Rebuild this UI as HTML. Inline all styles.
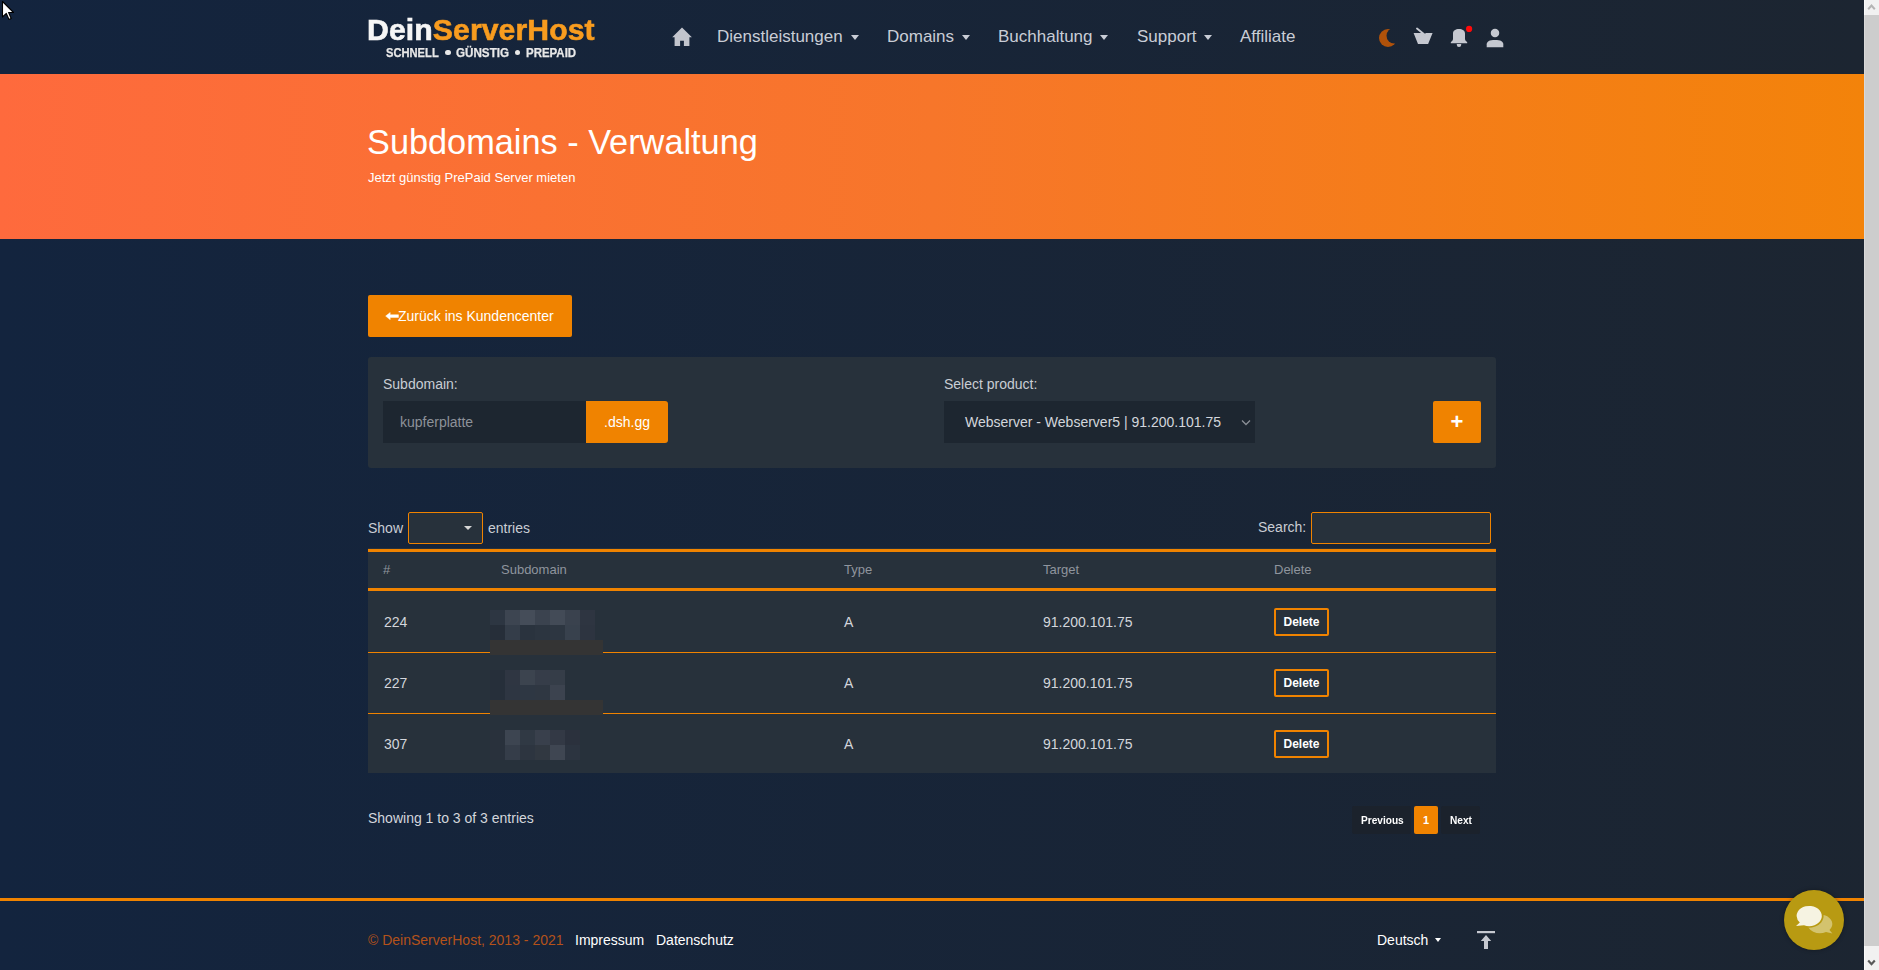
<!DOCTYPE html>
<html><head><meta charset="utf-8">
<style>
*{box-sizing:border-box;margin:0;padding:0}
html,body{width:1879px;height:970px;overflow:hidden}
body{font-family:"Liberation Sans",sans-serif;position:relative;background:linear-gradient(90deg,#13243e 0%,#1c2531 100%);color:#d3d6dc}
.a{position:absolute;white-space:nowrap}
#hdr{position:absolute;left:0;top:0;width:1864px;height:74px;background:linear-gradient(90deg,#13243e 0%,#1c2531 100%)}
#banner{position:absolute;left:0;top:74px;width:1864px;height:165px;background:linear-gradient(90deg,#fe6a3d 0%,#f7762a 50%,#f3830a 100%)}
.nav{font-size:17px;color:#c9cdd6;line-height:20px}
.caret{position:absolute;width:0;height:0;border-left:4px solid transparent;border-right:4px solid transparent;border-top:5px solid #c9cdd6}
.btn{background:#f08300;color:#fff;border-radius:2px}
#panel{position:absolute;left:368px;top:357px;width:1128px;height:111px;background:#27313b;border-radius:3px}
.lbl{font-size:14px;color:#c9cdd4}
#tbl{position:absolute;left:368px;top:548px;width:1128px;height:225px;background:#27313b}
.ol{position:absolute;left:0;width:1128px;background:#f08300}
.th{font-size:13px;color:#8f959e}
.td{font-size:14px;color:#d3d6dc}
.del{position:absolute;left:906px;width:55px;height:28px;border:2px solid #f08300;border-radius:2px;color:#fff;font-weight:bold;font-size:12px;text-align:center;line-height:24px}
.px{position:absolute;width:15px;height:15px}
#sb{position:absolute;left:1864px;top:0;width:15px;height:970px;background:#f1f1f1}
</style></head><body>
<div id="hdr"></div>
<div id="banner"></div>

<!-- logo -->
<div class="a" style="left:367px;top:11.5px;font-size:29px;font-weight:bold;letter-spacing:0.1px;line-height:36px;-webkit-text-stroke:0.6px currentColor;transform:scaleX(1.04);transform-origin:0 0"><span style="color:#f6f6f6;-webkit-text-stroke:0.6px #f6f6f6">Dein</span><span style="color:#f89c1f;-webkit-text-stroke:0.6px #f89c1f">ServerHost</span></div>
<div class="a" style="left:386px;top:46px;font-size:12px;font-weight:bold;color:#e8e8e8;line-height:14px;-webkit-text-stroke:0.25px #e8e8e8;transform:scaleX(0.93);transform-origin:0 0">SCHNELL</div>
<div class="a" style="left:445px;top:49.5px;width:5.5px;height:5.5px;border-radius:50%;background:#e8e8e8"></div>
<div class="a" style="left:456px;top:46px;font-size:12px;font-weight:bold;color:#e8e8e8;line-height:14px;-webkit-text-stroke:0.25px #e8e8e8;transform:scaleX(0.97);transform-origin:0 0">GÜNSTIG</div>
<div class="a" style="left:514.5px;top:49.5px;width:5.5px;height:5.5px;border-radius:50%;background:#e8e8e8"></div>
<div class="a" style="left:526px;top:46px;font-size:12px;font-weight:bold;color:#e8e8e8;line-height:14px;-webkit-text-stroke:0.25px #e8e8e8;transform:scaleX(0.955);transform-origin:0 0">PREPAID</div>

<!-- nav -->
<svg class="a" style="left:672px;top:27px" width="21" height="20" viewBox="0 0 21 20"><path d="M10 0.6 L19.9 10.2 L17.4 10.2 L17.4 19 L11.9 19 L11.9 13.8 L8.1 13.8 L8.1 19 L2.6 19 L2.6 10.2 L0.2 10.2 Z" fill="#c2c5cd"/></svg>
<div class="a nav" style="left:717px;top:27px">Dienstleistungen</div><div class="caret" style="left:851px;top:35px"></div>
<div class="a nav" style="left:887px;top:27px">Domains</div><div class="caret" style="left:962px;top:35px"></div>
<div class="a nav" style="left:998px;top:27px">Buchhaltung</div><div class="caret" style="left:1100px;top:35px"></div>
<div class="a nav" style="left:1137px;top:27px">Support</div><div class="caret" style="left:1204px;top:35px"></div>
<div class="a nav" style="left:1240px;top:27px">Affiliate</div>

<!-- banner text -->
<div class="a" style="left:367px;top:122px;font-size:34.3px;color:#fff;line-height:40px">Subdomains - Verwaltung</div>
<div class="a" style="left:368px;top:170px;font-size:13px;color:#fff;line-height:16px">Jetzt günstig PrePaid Server mieten</div>

<!-- back button -->
<div class="a btn" style="left:368px;top:295px;width:204px;height:42px;font-size:14px;line-height:42px;padding-left:30px">Zurück ins Kundencenter</div>
<svg class="a" style="left:385px;top:312px" width="14" height="8" viewBox="0 0 14 8"><path d="M0.6 4.1 L5.2 0.4 L5.2 2.7 L13.5 2.7 L13.5 5.5 L5.2 5.5 L5.2 7.8 Z" fill="#fff" stroke="#fff" stroke-width="0.4" stroke-linejoin="round"/></svg>

<!-- panel -->
<div id="panel"></div>
<div class="a lbl" style="left:383px;top:376px;line-height:16px">Subdomain:</div>
<div class="a" style="left:383px;top:401px;width:203px;height:42px;background:#1d2630"></div>
<div class="a" style="left:400px;top:414px;font-size:14px;color:#8d9299;line-height:16px">kupferplatte</div>
<div class="a btn" style="left:586px;top:401px;width:82px;height:42px;border-radius:0 3px 3px 0;font-size:14px;line-height:42px;text-align:center">.dsh.gg</div>
<div class="a lbl" style="left:944px;top:376px;line-height:16px">Select product:</div>
<div class="a" style="left:944px;top:401px;width:311px;height:42px;background:#1d2630"></div>
<div class="a" style="left:965px;top:414px;font-size:14px;color:#d3d6dc;line-height:16px">Webserver - Webserver5 | 91.200.101.75</div>
<div class="a btn" style="left:1433px;top:401px;width:48px;height:42px;font-size:22px;font-weight:bold;line-height:42px;text-align:center">+</div>

<!-- show entries -->
<div class="a lbl" style="left:368px;top:520px;line-height:16px">Show</div>
<div class="a" style="left:408px;top:512px;width:75px;height:32px;border:1px solid #f08300;border-radius:2px;background:#27313b"></div>
<div class="a lbl" style="left:488px;top:520px;line-height:16px">entries</div>
<div class="a lbl" style="left:1258px;top:519px;line-height:16px">Search:</div>
<div class="a" style="left:1311px;top:512px;width:180px;height:32px;border:1px solid #f08300;border-radius:2px;background:#27313b"></div>

<!-- table -->
<div id="tbl"></div>
<div class="a" style="left:368px;top:549px;width:1128px;height:3px;background:#f08300"></div>
<div class="a" style="left:368px;top:588px;width:1128px;height:3px;background:#f08300"></div>
<div class="a" style="left:368px;top:652px;width:1128px;height:1px;background:#f08300"></div>
<div class="a" style="left:368px;top:713px;width:1128px;height:1px;background:#f08300"></div>
<div class="a th" style="left:383px;top:562px;line-height:15px">#</div>
<div class="a th" style="left:501px;top:562px;line-height:15px">Subdomain</div>
<div class="a th" style="left:844px;top:562px;line-height:15px">Type</div>
<div class="a th" style="left:1043px;top:562px;line-height:15px">Target</div>
<div class="a th" style="left:1274px;top:562px;line-height:15px">Delete</div>
<div class="a td" style="left:384px;top:614px;line-height:16px">224</div>
<div class="a td" style="left:844px;top:614px;line-height:16px">A</div>
<div class="a td" style="left:1043px;top:614px;line-height:16px">91.200.101.75</div>
<div class="a del" style="left:1274px;top:608px">Delete</div>
<div class="a td" style="left:384px;top:675px;line-height:16px">227</div>
<div class="a td" style="left:844px;top:675px;line-height:16px">A</div>
<div class="a td" style="left:1043px;top:675px;line-height:16px">91.200.101.75</div>
<div class="a del" style="left:1274px;top:669px">Delete</div>
<div class="a td" style="left:384px;top:736px;line-height:16px">307</div>
<div class="a td" style="left:844px;top:736px;line-height:16px">A</div>
<div class="a td" style="left:1043px;top:736px;line-height:16px">91.200.101.75</div>
<div class="a del" style="left:1274px;top:730px">Delete</div>

<div class="px" style="left:490px;top:610px;background:#2d3642"></div><div class="px" style="left:505px;top:610px;background:#3d4551"></div><div class="px" style="left:520px;top:610px;background:#454d59"></div><div class="px" style="left:535px;top:610px;background:#3b434f"></div><div class="px" style="left:550px;top:610px;background:#434b57"></div><div class="px" style="left:565px;top:610px;background:#3a424e"></div><div class="px" style="left:580px;top:610px;background:#2e3541"></div><div class="px" style="left:490px;top:625px;background:#262e39"></div><div class="px" style="left:505px;top:625px;background:#343d49"></div><div class="px" style="left:520px;top:625px;background:#2a333e"></div><div class="px" style="left:535px;top:625px;background:#2c3540"></div><div class="px" style="left:550px;top:625px;background:#2d3641"></div><div class="px" style="left:565px;top:625px;background:#38414d"></div><div class="px" style="left:580px;top:625px;background:#2d3440"></div>
<div class="px" style="left:490px;top:670px;background:#262f3a"></div><div class="px" style="left:505px;top:670px;background:#2f3642"></div><div class="px" style="left:520px;top:670px;background:#3c444f"></div><div class="px" style="left:535px;top:670px;background:#363d49"></div><div class="px" style="left:550px;top:670px;background:#353d48"></div><div class="px" style="left:490px;top:685px;background:#262f3a"></div><div class="px" style="left:505px;top:685px;background:#2e3642"></div><div class="px" style="left:520px;top:685px;background:#2e3743"></div><div class="px" style="left:535px;top:685px;background:#2f3742"></div><div class="px" style="left:550px;top:685px;background:#3c434f"></div>
<div class="px" style="left:490px;top:730px;background:#29313c"></div><div class="px" style="left:505px;top:730px;background:#3d4551"></div><div class="px" style="left:520px;top:730px;background:#303944"></div><div class="px" style="left:535px;top:730px;background:#39404c"></div><div class="px" style="left:550px;top:730px;background:#333945"></div><div class="px" style="left:565px;top:730px;background:#2b313d"></div><div class="px" style="left:490px;top:745px;background:#29313c"></div><div class="px" style="left:505px;top:745px;background:#353d49"></div><div class="px" style="left:520px;top:745px;background:#2d3540"></div><div class="px" style="left:535px;top:745px;background:#313841"></div><div class="px" style="left:550px;top:745px;background:#3f4652"></div><div class="px" style="left:565px;top:745px;background:#2c3440"></div>
<div class="a" style="left:490px;top:640px;width:113px;height:15px;background:#343434"></div>
<div class="a" style="left:490px;top:700px;width:113px;height:15px;background:#343434"></div>

<!-- select carets -->
<div class="caret" style="left:464px;top:526px;border-top-color:#d6d6d6;border-left-width:4px;border-right-width:4px;border-top-width:4px"></div>
<svg class="a" style="left:1241px;top:419px" width="10" height="7" viewBox="0 0 10 7"><path d="M1 1.5 L5 5.5 L9 1.5" fill="none" stroke="#8a8f96" stroke-width="1.3"/></svg>

<!-- pagination -->
<div class="a" style="left:1352px;top:806px;width:59px;height:28px;background:#1b222c;border-radius:2px"></div>
<div class="a" style="left:1361px;top:813.2px;font-size:11px;font-weight:bold;color:#fff;line-height:14px;transform:scaleX(0.92);transform-origin:0 0">Previous</div>
<div class="a btn" style="left:1414px;top:806px;width:24px;height:28px;border-radius:2px"></div>
<div class="a" style="left:1423px;top:813.2px;font-size:11px;font-weight:bold;color:#fff;line-height:14px">1</div>
<div class="a" style="left:1441px;top:806px;width:39px;height:28px;background:#1b222c;border-radius:2px"></div>
<div class="a" style="left:1449.5px;top:813.2px;font-size:11px;font-weight:bold;color:#fff;line-height:14px;transform:scaleX(0.92);transform-origin:0 0">Next</div>
<!-- pagination / info -->
<div class="a td" style="left:368px;top:810px;line-height:16px">Showing 1 to 3 of 3 entries</div>

<!-- footer -->
<div class="a" style="left:0;top:898px;width:1864px;height:3px;background:#f08300"></div>
<div class="a" style="left:368px;top:932px;font-size:14px;color:#b4521a;line-height:16px">© DeinServerHost, 2013 - 2021</div>
<div class="a" style="left:575px;top:932px;font-size:14px;color:#fff;line-height:16px">Impressum</div>
<div class="a" style="left:656px;top:932px;font-size:14px;color:#fff;line-height:16px">Datenschutz</div>
<div class="a" style="left:1377px;top:932px;font-size:14px;color:#fff;line-height:16px">Deutsch</div>

<div id="sb"></div>

<!-- header icons -->
<svg class="a" style="left:1378px;top:28px" width="20" height="20" viewBox="0 0 20 20"><defs><mask id="mm"><rect width="20" height="20" fill="#fff"/><circle cx="16.2" cy="7.7" r="7.7" fill="#000"/></mask></defs><circle cx="10" cy="10" r="9" fill="#b0520a" mask="url(#mm)"/></svg>
<svg class="a" style="left:1412px;top:26px" width="22" height="20" viewBox="0 0 22 20"><path d="M5 2.6 L12.4 8.6" stroke="#c5c8d0" stroke-width="1.9" stroke-linecap="round" fill="none"/><path d="M1.6 7 L10.8 7 L12.4 9.2 L13.6 7 L20.6 7 L16.1 18 L6 18 Z" fill="#c5c8d0"/></svg>
<svg class="a" style="left:1449px;top:25px" width="24" height="24" viewBox="0 0 24 24"><path d="M4 8.5 C4 5.5 6.5 3.9 10 3.9 C13.5 3.9 16 5.5 16 8.5 L16 14 C16 15.5 17.5 16.5 18.2 17.2 L18.2 18.2 L1.8 18.2 L1.8 17.2 C2.5 16.5 4 15.5 4 14 Z" fill="#c5c8d0"/><path d="M7.8 19 L12.2 19 L12.2 19.8 A2.2 2.2 0 0 1 7.8 19.8 Z" fill="#c5c8d0"/><circle cx="20.1" cy="3.9" r="3.1" fill="#ff0a0a"/></svg>
<svg class="a" style="left:1486px;top:28px" width="18" height="20" viewBox="0 0 18 20"><circle cx="9" cy="5.1" r="4.25" fill="#c5c8d0"/><path d="M0.7 19.2 L0.7 16.2 C0.7 13.3 3.5 11.9 9 11.9 C14.5 11.9 17.3 13.3 17.3 16.2 L17.3 19.2 Z" fill="#c5c8d0"/></svg>

<!-- footer extras -->
<div class="caret" style="left:1435px;top:938px;border-top-color:#fff;border-left-width:3.5px;border-right-width:3.5px;border-top-width:4px"></div>
<svg class="a" style="left:1476px;top:930px" width="20" height="20" viewBox="0 0 20 20"><rect x="1" y="1" width="18" height="2.2" fill="#c5c8d0"/><path d="M10 5 L15.2 11 L12 11 L12 19 L8 19 L8 11 L4.8 11 Z" fill="#c5c8d0"/></svg>

<!-- chat bubble -->
<div class="a" style="left:1784px;top:890px;width:60px;height:60px;border-radius:50%;background:#b89a12;box-shadow:0 0 4px rgba(0,0,0,0.35)"></div>
<svg class="a" style="left:1784px;top:890px" width="60" height="60" viewBox="0 0 60 60"><path d="M23.6 33 A12.4 9.4 0 1 1 45.5 40 L48.4 43.6 L42 42 A12.4 9.4 0 0 1 23.6 33 Z" fill="#d3c36e"/><ellipse cx="25" cy="26" rx="14.6" ry="11.7" fill="#b89a12"/><path d="M12.6 26 A12.6 10.1 0 1 1 20 35.2 L12 36 L15.8 32.6 A10 10 0 0 1 12.6 26 Z" fill="#f6f3e2"/></svg>

<!-- scrollbar -->
<div class="a" style="left:1864px;top:15px;width:15px;height:931px;background:#cdcdcd;border-left:1px solid #d9d9d9"></div>
<div class="a" style="left:1864px;top:0;width:1px;height:15px;background:#fbfbfb"></div>
<div class="a" style="left:1864px;top:946px;width:1px;height:24px;background:#fbfbfb"></div>
<svg class="a" style="left:1864px;top:0" width="15" height="15" viewBox="0 0 15 15"><path d="M4.2 9.2 L7.5 5.6 L10.8 9.2" fill="none" stroke="#b4b4b4" stroke-width="2"/></svg>
<svg class="a" style="left:1864px;top:955px" width="15" height="15" viewBox="0 0 15 15"><path d="M4.2 5.6 L7.5 9.2 L10.8 5.6" fill="none" stroke="#595959" stroke-width="2.2"/></svg>

<!-- cursor -->
<svg class="a" style="left:0;top:0" width="16" height="22" viewBox="0 0 16 22"><path d="M2.5 1.5 L2.5 17 L6.3 13.4 L9 19.5 L11.2 18.5 L8.6 12.5 L13.5 12.5 Z" fill="#fff" stroke="#000" stroke-width="1.1" stroke-linejoin="round"/></svg>
</body></html>
